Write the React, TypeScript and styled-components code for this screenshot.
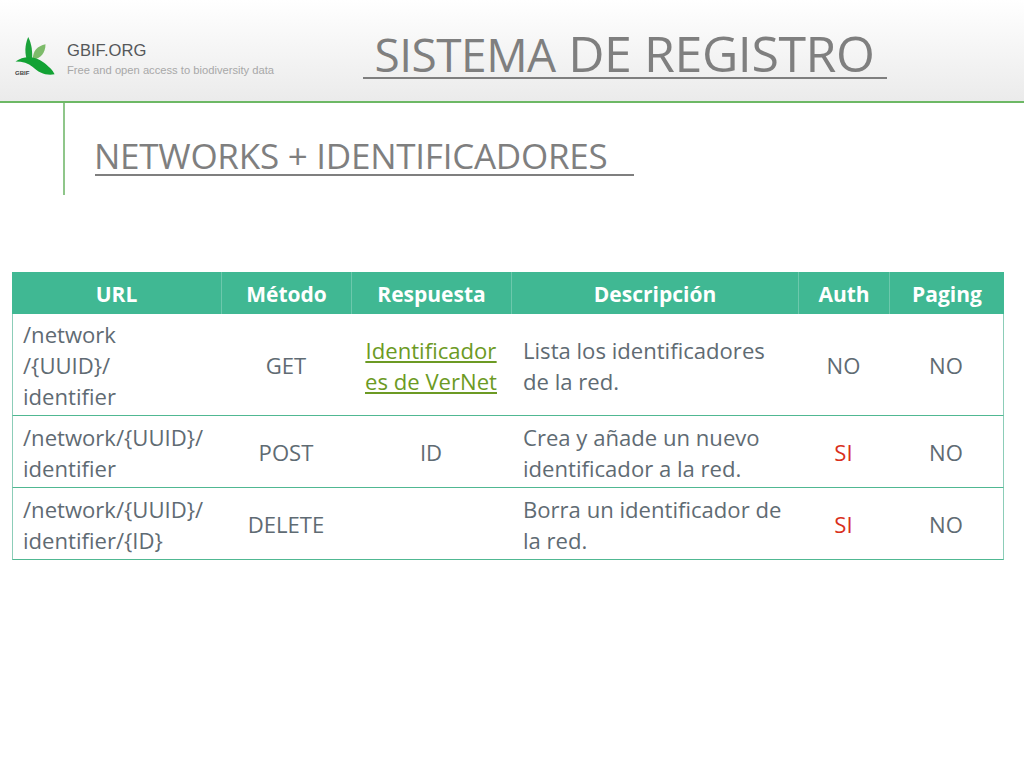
import React from "react";
import styled, { createGlobalStyle } from "styled-components";

const rows = [
  {
    url: ["/network", "/{UUID}/", "identifier"],
    method: "GET",
    response: ["Identificador", "es de VerNet"],
    link: true,
    description: ["Lista los identificadores", "de la red."],
    auth: "NO",
  },
  {
    url: ["/network/{UUID}/", "identifier"],
    method: "POST",
    response: ["ID"],
    link: false,
    description: ["Crea y añade un nuevo", "identificador a la red."],
    auth: "SI",
  },
  {
    url: ["/network/{UUID}/", "identifier/{ID}"],
    method: "DELETE",
    response: [],
    link: false,
    description: ["Borra un identificador de", "la red."],
    auth: "SI",
  },
];

const lines = (items: string[]) =>
  items.map((line) => <Line key={line}>{line}</Line>);

export default function App() {
  return (
    <Slide>
      <GlobalStyle />
      <Header>
        <Brand>
          <Logo viewBox="0 0 44 44" aria-hidden="true">
            <path d="M14 0 C10 9 10 18 13 27 L18 27 C19 17 18 8 14 0 Z" fill="#1ba23a" />
            <path d="M19 25 C19 15 24 10 33 8 C33 17 28 24 19 25 Z" fill="#7dbb6a" />
            <path
              d="M0 27 C9 20 22 21 31 28 C36 32 41 36 43 41 C34 43 25 39 19 33 C14 29 8 27 0 27 Z"
              fill="#12a234"
            />
          </Logo>
          <LogoMark>GBIF</LogoMark>
          <BrandText>
            <BrandName>GBIF.ORG</BrandName>
            <BrandTag>Free and open access to biodiversity data</BrandTag>
          </BrandText>
        </Brand>
        <Title>
          <TitleSmall> SISTEMA</TitleSmall> DE REGISTRO{" "}
        </Title>
      </Header>
      <Section>
        <Heading>NETWORKS + IDENTIFICADORES   </Heading>
      </Section>
      <Table>
        <colgroup>
          <col style={{ width: 209 }} />
          <col style={{ width: 130 }} />
          <col style={{ width: 160 }} />
          <col style={{ width: 287 }} />
          <col style={{ width: 91 }} />
          <col style={{ width: 115 }} />
        </colgroup>
        <thead>
          <tr>
            <HeadCell>URL</HeadCell>
            <HeadCell>Método</HeadCell>
            <HeadCell>Respuesta</HeadCell>
            <HeadCell>Descripción</HeadCell>
            <HeadCell>Auth</HeadCell>
            <HeadCell>Paging</HeadCell>
          </tr>
        </thead>
        <tbody>
          {rows.map((row) => (
            <tr key={row.method}>
              <UrlCell>{lines(row.url)}</UrlCell>
              <Cell $center>{row.method}</Cell>
              <Cell $center>
                {row.link ? (
                  <VerNetLink href="#">{lines(row.response)}</VerNetLink>
                ) : (
                  lines(row.response)
                )}
              </Cell>
              <Cell>{lines(row.description)}</Cell>
              <Cell $center $alert={row.auth === "SI"}>
                {row.auth}
              </Cell>
              <Cell $center>NO</Cell>
            </tr>
          ))}
        </tbody>
      </Table>
    </Slide>
  );
}

const GlobalStyle = createGlobalStyle`
  html, body {
    margin: 0;
    padding: 0;
    background: #fff;
  }
`;

const Slide = styled.div`
  width: 1024px;
  height: 768px;
  overflow: hidden;
  font-family: "Open Sans", "Noto Sans", sans-serif;
  color: #5f6b73;
`;

const Header = styled.header`
  height: 101px;
  display: flex;
  align-items: flex-start;
  background: linear-gradient(180deg, #ffffff 0%, #ebebeb 100%);
  border-bottom: 2px solid #6db865;
`;

const Brand = styled.div`
  width: 363px;
  position: relative;
  display: flex;
  padding: 37px 0 0 15px;
  box-sizing: border-box;
`;

const Logo = styled.svg`
  width: 41px;
  height: 40px;
  flex: none;
`;

const LogoMark = styled.span`
  position: absolute;
  left: 15px;
  top: 69px;
  font: bold 6px/8px "Liberation Sans", sans-serif;
  color: #444;
`;

const BrandText = styled.div`
  margin: 4px 0 0 11px;
  font-family: "Liberation Sans", Arial, sans-serif;
`;

const BrandName = styled.div`
  font-size: 16.6px;
  line-height: 19px;
  color: #55585a;
`;

const BrandTag = styled.div`
  margin-top: 2px;
  font-size: 11.2px;
  line-height: 16px;
  color: #a8a8a8;
  white-space: nowrap;
`;

const Title = styled.h1`
  margin: 30px 0 0;
  font-weight: 400;
  font-size: 50px;
  line-height: 46px;
  color: #7f7f7f;
  border-bottom: 2px solid #7f7f7f;
  white-space: pre;
  letter-spacing: -0.4px;
`;

const TitleSmall = styled.span`
  font-size: 46px;
  letter-spacing: -0.5px;
`;

const Section = styled.section`
  height: 92px;
  margin-left: 63px;
  padding-left: 30px;
  border-left: 2px solid #8fc68a;
  box-sizing: border-box;
`;

const Heading = styled.h2`
  display: inline-block;
  margin: 35px 0 0;
  font-weight: 400;
  font-size: 35px;
  line-height: 36px;
  color: #7f7f7f;
  border-bottom: 2px solid #7f7f7f;
  white-space: pre;
  letter-spacing: -0.25px;
  text-indent: -1px;
`;

const Table = styled.table`
  width: 992px;
  margin: 77px 0 0 12px;
  border-collapse: separate;
  border-spacing: 0;
  table-layout: fixed;
  font-size: 22.1px;
  line-height: 31px;
`;

const HeadCell = styled.th`
  height: 42px;
  padding: 2px 0 0;
  box-sizing: border-box;
  background: #40b893;
  color: #fff;
  font-size: 21px;
  font-weight: 700;
  text-align: center;
  border-left: 1px solid #6cc8ac;

  &:first-child {
    border-left: 0;
  }
`;

const Cell = styled.td<{ $center?: boolean; $alert?: boolean }>`
  height: 72px;
  box-sizing: border-box;
  padding: ${(p) => (p.$center ? "5px 0 3px" : "5px 6px 3px 12px")};
  text-align: ${(p) => (p.$center ? "center" : "left")};
  color: ${(p) => (p.$alert ? "#d9301c" : "#5f6b73")};
  border-bottom: 1px solid #50b892;
  white-space: nowrap;

  &:last-child {
    border-right: 1px solid #8ccdb8;
  }
`;

const UrlCell = styled(Cell)`
  padding-left: 10px;
  border-left: 1px solid #8ccdb8;
`;

const Line = styled.div``;

const VerNetLink = styled.a`
  display: block;
  color: #6c9a24;

  ${Line} {
    text-decoration: underline;
  }
`;
